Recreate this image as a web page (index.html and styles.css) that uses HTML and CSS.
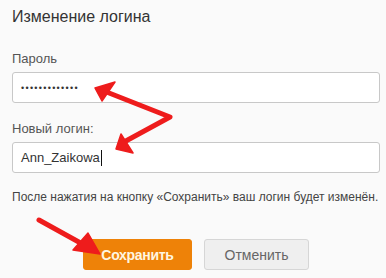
FILE: index.html
```html
<!DOCTYPE html>
<html lang="ru">
<head>
<meta charset="utf-8">
<link rel="stylesheet" href="styles.css">
</head>
<body>
<div class="page">
  <h1 class="title">Изменение логина</h1>
  <div class="field">
    <div class="label">Пароль</div>
    <div class="input"><span class="dots">•••••••••••••</span></div>
  </div>
  <div class="field field-second">
    <div class="label">Новый логин:</div>
    <div class="input"><span class="value">Ann_Zaikowa</span><span class="caret"></span></div>
  </div>
  <p class="note">После нажатия на кнопку «Сохранить» ваш логин будет изменён.</p>
  <div class="actions">
    <button class="btn btn-primary">Сохранить</button>
    <button class="btn btn-secondary">Отменить</button>
  </div>
  <svg class="arrows" width="386" height="278" viewBox="0 0 386 278">
    <g fill="#ee1c1c" stroke="#ee1c1c" stroke-linejoin="round" stroke-linecap="round">
      <polyline points="104,91 170,117 124,142" fill="none" stroke-width="5"/>
      <polygon points="95,88 115,82 102,101" stroke-width="1.5"/>
      <polygon points="116,149 121,134 133,153" stroke-width="1.5"/>
      <line x1="39" y1="220" x2="86" y2="246" stroke-width="5"/>
      <polygon points="100,254 73,250 88,233" stroke-width="1.5"/>
    </g>
  </svg>
</div>
</body>
</html>
```

FILE: styles.css
```css
html, body {
  margin: 0;
  padding: 0;
  background: #fafafa;
}
body {
  font-family: "Liberation Sans", Arial, sans-serif;
  color: #333;
}
.page {
  position: relative;
  width: 386px;
  height: 278px;
  box-sizing: border-box;
  padding: 8px 6px 0 12px;
  overflow: hidden;
}
.title {
  margin: 0;
  font-size: 16px;
  font-weight: normal;
  line-height: 18px;
  color: #333;
}
.field {
  margin-top: 25px;
}
.field-second {
  margin-top: 18px;
}
.label {
  font-size: 13px;
  line-height: 16px;
  color: #555;
  margin-bottom: 5px;
}
.input {
  height: 31px;
  box-sizing: border-box;
  border: 1px solid #c8c8c8;
  border-radius: 3px;
  background: #fff;
  display: flex;
  align-items: center;
  padding: 0 8px;
  font-size: 13px;
  color: #333;
}
.dots {
  font-size: 9px;
  letter-spacing: 1.3px;
  color: #333;
}
.value {
  font-size: 13px;
}
.caret {
  display: inline-block;
  width: 1px;
  height: 16px;
  background: #111;
  margin-left: 1px;
}
.note {
  margin: 17px 0 0;
  font-size: 12px;
  line-height: 15px;
  color: #444;
}
.actions {
  display: flex;
  gap: 12px;
  margin-top: 34px;
  padding-left: 71px;
}
.btn {
  height: 31px;
  border-radius: 3px;
  font-family: "Liberation Sans", Arial, sans-serif;
  font-size: 14px;
  padding: 0;
  cursor: pointer;
}
.btn-primary {
  width: 109px;
  background: #ee8208;
  border: 1px solid #ee8208;
  color: #fff6e0;
  font-weight: bold;
  letter-spacing: -0.3px;
}
.btn-secondary {
  width: 105px;
  background: #efefef;
  border: 1px solid #d6d6d6;
  color: #666;
}
.arrows {
  position: absolute;
  left: 0;
  top: 0;
  pointer-events: none;
}
```
